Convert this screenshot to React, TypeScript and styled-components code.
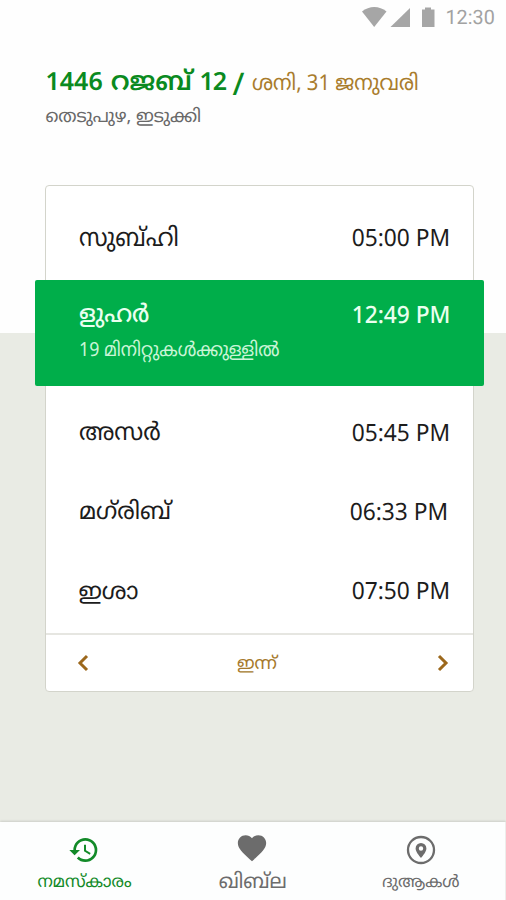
import React from "react";
import styled, { createGlobalStyle } from "styled-components";
import { MdFavorite, MdHistory } from "react-icons/md";

const GlobalStyle = createGlobalStyle`
  * { box-sizing: border-box; }
  body { margin: 0; background: #fff; font-family: "Noto Sans", "Noto Sans Malayalam", sans-serif; text-rendering: geometricPrecision; }
`;

const Screen = styled.div`
  width: 506px;
  height: 900px;
  display: flex;
  flex-direction: column;
  overflow: hidden;
  background: linear-gradient(#fefefe 333px, #e9ebe4 333px);
`;

const StatusBar = styled.header`
  height: 36px;
  padding: 0 10px 0 361px;
  display: flex;
  align-items: center;
  color: #a2a2a2;
`;

const StatusIcons = styled.svg`
  width: 76px;
  height: 36px;
  flex: none;
  fill: #a6a6a6;
`;

const Clock = styled.span`
  margin-left: 8.5px;
  font: 400 19.8px/36px Roboto, sans-serif;
`;

/* Text whose glyph widths are scaled horizontally from one edge. */
const Label = styled.span<{ $size: number; $stretch?: number; $origin?: string; $weight?: number }>`
  display: inline-block;
  white-space: nowrap;
  font-size: ${(p) => p.$size}px;
  font-weight: ${(p) => p.$weight ?? 400};
  transform: scaleX(${(p) => p.$stretch ?? 1});
  transform-origin: ${(p) => p.$origin ?? "left"} center;
`;

const Heading = styled.section`
  height: 149px;
  padding: 26px 0 0 45.5px;
`;

const DateLine = styled.h1`
  margin: 0;
  height: 37px;
  display: flex;
  align-items: baseline;
  line-height: 36px;
  font-weight: 400;
  color: #0a8a20;
`;

const Hijri = styled.span`
  width: 206.5px;
  flex: none;
  font-size: 25px;
  font-weight: 600;
  white-space: pre;
`;

const Month = styled.span`
  margin: 0 1px 0 1.5px;
  font-size: 26.3px;
`;

const Day = styled.span`
  letter-spacing: -1px;
`;

const Slash = styled.span`
  margin-left: 1px;
  font-size: 31px;
  font-weight: 500;
  line-height: 0;
  vertical-align: -4.5px;
`;

const Gregorian = styled(Label)`
  color: #a97c2c;
`;

const Place = styled.div`
  height: 32px;
  line-height: 34px;
  color: #686868;
`;

const Card = styled.main`
  width: 429px;
  height: 507px;
  flex: none;
  margin: 0 0 0 45px;
  padding-top: 11px;
  display: flex;
  flex-direction: column;
  background: #fff;
  border: 1px solid #d3d4cb;
  border-radius: 4px;
`;

const Row = styled.div`
  height: 79px;
  padding: 0 23.5px 0 32.5px;
  display: flex;
  align-items: center;
  justify-content: space-between;
  line-height: 40px;
  color: #1c1c1c;
`;

const ActiveRow = styled.div`
  height: 106px;
  margin: 3.5px -11px 6.5px;
  padding: 14.5px 33.5px 0 43.5px;
  background: #00ae4a;
  border-radius: 2px;
  color: #eaffef;
`;

const ActiveTop = styled.div`
  height: 40px;
  display: flex;
  justify-content: space-between;
  line-height: 40px;
`;

const Remaining = styled.div`
  height: 30px;
  line-height: 30px;
  color: #c9f5d6;
`;

const Time = styled.span<{ $shift?: number; $weight?: number }>`
  font-size: 23.8px;
  font-weight: ${(p) => p.$weight ?? 400};
  margin-right: ${(p) => p.$shift ?? 0}px;
  transform: scaleX(0.955);
  transform-origin: right center;
`;

const DayPager = styled.div`
  flex: 1;
  margin-top: 4px;
  padding: 0 24px 0 31px;
  display: flex;
  align-items: center;
  justify-content: space-between;
  border-top: 2px solid #e6e6e1;
  color: #a67a2d;
`;

const DayName = styled(Label)`
  margin-right: 12px;
`;

const PagerButton = styled.button`
  display: flex;
  padding: 0;
  border: 0;
  background: none;
  color: #9c681c;
`;

const Nav = styled.nav`
  height: 78px;
  margin-top: auto;
  flex: none;
  display: grid;
  grid-template-columns: repeat(3, 1fr);
  background: #fdfefe;
  border-right: 1px solid #ededeb;
  box-shadow: 0 -1px 2px rgba(0, 0, 0, 0.12);
`;

const NavItem = styled.a<{ $active?: boolean }>`
  display: flex;
  flex-direction: column;
  align-items: center;
  color: ${(p) => (p.$active ? "#128a28" : "#6c6c6c")};
`;

const NavIcon = styled.span<{ $lift?: number }>`
  height: 44px;
  padding-top: ${(p) => 12 - (p.$lift ?? 0)}px;
  display: flex;
  align-items: center;
  justify-content: center;
`;

const NavText = styled.span`
  line-height: 30px;
`;

const Chevron = ({ right }: { right?: boolean }) => (
  <svg width="12" height="18" viewBox="0 0 12 18" fill="none" stroke="currentColor" strokeWidth="3">
    <path d={right ? "M2 2 9 9 2 16" : "M10 2 3 9l7 7"} />
  </svg>
);

const PinIcon = () => (
  <svg width="30" height="30" viewBox="0 0 30 30">
    <circle cx="15" cy="15" r="13" fill="none" stroke="currentColor" strokeWidth="2.3" />
    <path
      fill="currentColor"
      fillRule="evenodd"
      d="M15 8a5.4 5.4 0 0 0-5.4 5.4C9.6 17.2 15 22.8 15 22.8s5.4-5.6 5.4-9.4A5.4 5.4 0 0 0 15 8Zm0 3.3a2.2 2.2 0 1 1 0 4.4 2.2 2.2 0 0 1 0-4.4Z"
    />
  </svg>
);

const laterPrayers = [
  { name: "അസർ", size: 24.4, stretch: 0.97, time: "05:45 PM" },
  { name: "മഗ്‌രിബ്", size: 23.9, stretch: 0.99, time: "06:33 PM", shift: 2 },
  { name: "ഇശാ", size: 23.7, stretch: 1, time: "07:50 PM" },
];

export default function App() {
  return (
    <Screen>
      <GlobalStyle />
      <StatusBar>
        <StatusIcons viewBox="0 0 76 36">
          <path d="M1 11.5C8 5.5 18.5 5.5 25.5 11.5L13.2 27Z" />
          <path d="M49 8v19H29.5Z" />
          <path d="M61 9.5h3V7.5h6v2h3.5V27H61Z" />
        </StatusIcons>
        <Clock>12:30</Clock>
      </StatusBar>

      <Heading>
        <DateLine>
          <Hijri>
            1446 <Month>റജബ്</Month> <Day>12 </Day><Slash>/</Slash>
          </Hijri>
          <Gregorian $size={21.8} $stretch={0.93}>ശനി, 31 ജനുവരി</Gregorian>
        </DateLine>
        <Place>
          <Label $size={18}>തെടുപുഴ, ഇടുക്കി</Label>
        </Place>
      </Heading>

      <Card>
        <Row>
          <Label $size={25.2} $stretch={0.925}>സുബ്ഹി</Label>
          <Time>05:00 PM</Time>
        </Row>
        <ActiveRow>
          <ActiveTop>
            <Label $size={24.5} $stretch={0.927} $weight={500}>ളുഹർ</Label>
            <Time $weight={500}>12:49 PM</Time>
          </ActiveTop>
          <Remaining>
            <Label $size={19.5} $stretch={0.91}>19 മിനിറ്റുകൾക്കുള്ളിൽ</Label>
          </Remaining>
        </ActiveRow>
        {laterPrayers.map((p) => (
          <Row key={p.time}>
            <Label $size={p.size} $stretch={p.stretch}>{p.name}</Label>
            <Time $shift={p.shift}>{p.time}</Time>
          </Row>
        ))}
        <DayPager>
          <PagerButton aria-label="മുമ്പ്"><Chevron /></PagerButton>
          <DayName $size={17.8}>ഇന്ന്</DayName>
          <PagerButton aria-label="അടുത്തത്"><Chevron right /></PagerButton>
        </DayPager>
      </Card>

      <Nav>
        <NavItem $active>
          <NavIcon><MdHistory size={32} /></NavIcon>
          <NavText><Label $size={17} $stretch={0.99} $origin="center">നമസ്‌കാരം</Label></NavText>
        </NavItem>
        <NavItem>
          <NavIcon $lift={4}><MdFavorite size={34} /></NavIcon>
          <NavText><Label $size={20.5} $stretch={0.98} $origin="center">ഖിബ്‌ല</Label></NavText>
        </NavItem>
        <NavItem>
          <NavIcon><PinIcon /></NavIcon>
          <NavText><Label $size={16.5} $stretch={1} $origin="center">ദുആകൾ</Label></NavText>
        </NavItem>
      </Nav>
    </Screen>
  );
}
